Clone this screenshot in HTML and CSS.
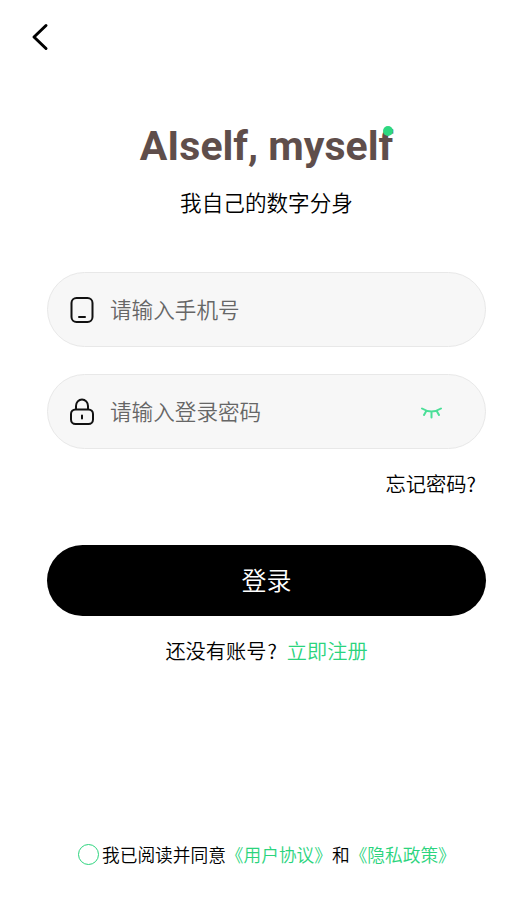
FILE: index.html
```html
<!DOCTYPE html>
<html lang="zh-CN">
<head>
<meta charset="utf-8">
<title>登录</title>
<link rel="stylesheet" href="styles.css">
</head>
<body>
<main class="page">
  <header class="topbar">
    <svg class="back" width="20" height="28" viewBox="0 0 20 28"><path d="M16 2.500 4 14l12 11.500"/></svg>
  </header>
  <h1 class="brand"><span>AIself, myself</span><i class="brand-dot"></i></h1>
  <p class="tagline">我自己的数字分身</p>
  <form class="form">
    <label class="field">
      <svg class="icon" width="26" height="28" viewBox="0 0 26 28"><rect x="2.500" y="2" width="21" height="24" rx="5"/><path d="M10 21h6"/></svg>
      <span class="placeholder">请输入手机号</span>
    </label>
    <label class="field">
      <svg class="icon" width="26" height="28" viewBox="0 0 26 28"><rect x="2" y="11.500" width="22" height="14.500" rx="4.500"/><path d="M7 11V8a6 6.500 0 0 1 12 0V11M13 17.500v3"/></svg>
      <span class="placeholder">请输入登录密码</span>
      <svg class="eye" width="22" height="14" viewBox="0 0 22 14"><path d="M2 3.500q9.500 6 19 0M6 6.500l-2 3.500M11.500 7v5.500M17 6.500l2 3.500"/></svg>
    </label>
    <a class="forgot">忘记密码?</a>
    <button class="submit" type="button">登录</button>
  </form>
  <p class="signup">还没有账号<span class="mark">?</span><a class="link">立即注册</a></p>
  <footer class="terms"><span class="radio"></span><span>我已阅读并同意<a class="link">《用户协议》</a>和<a class="link">《隐私政策》</a></span></footer>
</main>
</body>
</html>
```
FILE: styles.css
```css
* { box-sizing: border-box; }
body { margin: 0; background: #fff; color: #000; font-family: "Noto Sans CJK SC", sans-serif; font-weight: 350; }
.page { height: 905px; display: flex; flex-direction: column; padding: 0 44px 0 47px; }
svg { display: block; fill: none; stroke: #111; stroke-width: 2; stroke-linecap: round; stroke-linejoin: round; flex: none; }
.topbar { height: 74px; display: flex; align-items: center; margin-left: -17px; }
.back { stroke: #000; stroke-width: 3; }
.brand { position: relative; align-self: center; margin: 48px 0 0; font-family: Roboto, sans-serif; font-size: 41px; line-height: 48px; font-weight: 700; color: #5f4e4b; white-space: nowrap; }
.brand-dot { position: absolute; right: 0; top: 4px; width: 10px; height: 10px; border-radius: 50%; background: #2ed880; }
.tagline { margin: 16px 0 0; text-align: center; font-size: 21.6px; line-height: 32px; }
.form { display: flex; flex-direction: column; margin-top: 54px; }
.field { height: 75px; display: flex; align-items: center; border: 1px solid #e8e8e8; border-radius: 38px; background: #f7f7f7; padding: 0 43px 0 21px; margin-bottom: 27px; }
.placeholder { flex: 1; margin-left: 15px; padding-bottom: 1px; font-size: 21.6px; line-height: 32px; color: #666; }
.eye { stroke: #4bdf98; }
.forgot { align-self: flex-end; margin: -8px 10px 0 0; font-size: 20.3px; line-height: 30px; }
.submit { height: 71px; margin-top: 47px; border: 0; border-radius: 36px; background: #000; color: #fff; font: inherit; font-size: 25px; padding: 0 0 3px; }
.signup { margin: 20px 0 0; text-align: center; font-size: 20.2px; line-height: 30px; }
.link { color: #2bd47d; }
.signup .mark { margin-left: 1px; }
.signup .link { margin-left: 10px; }
.terms { display: flex; align-items: center; margin: auto 0 38px 31px; font-size: 17.7px; line-height: 26px; white-space: nowrap; }
.radio { width: 21px; height: 21px; margin-right: 3px; border: 1px solid #2bd47d; border-radius: 50%; }
```
